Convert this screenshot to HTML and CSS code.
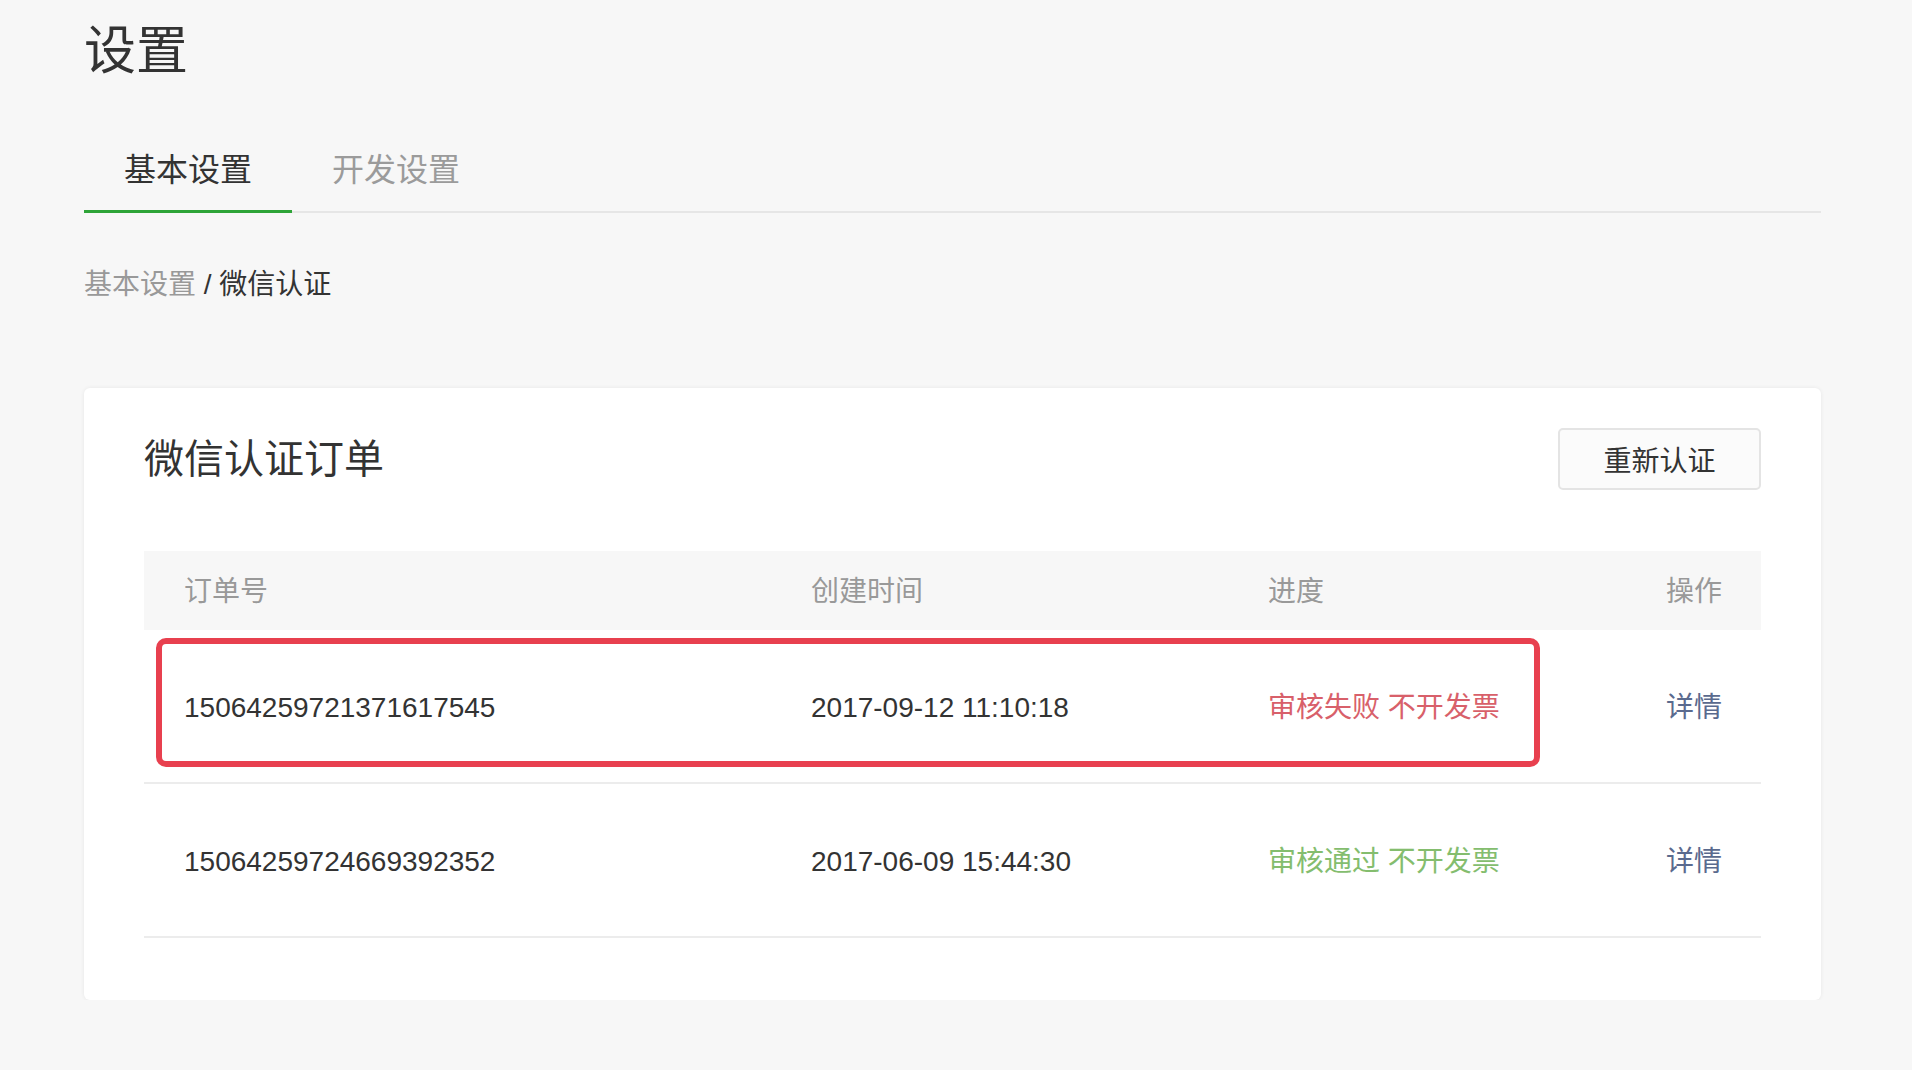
FILE: index.html
```html
<!DOCTYPE html>
<html lang="zh-CN">
<head>
<meta charset="utf-8">
<title>设置</title>
<link rel="stylesheet" href="styles.css">
</head>
<body>
<div class="page">
  <h1 class="page-title">设置</h1>
  <div class="tabs">
    <div class="tab tab-active">基本设置</div>
    <div class="tab">开发设置</div>
  </div>
  <div class="crumbs"><span class="crumb-muted">基本设置</span> / 微信认证</div>
  <div class="card">
    <div class="card-head">
      <div class="card-title">微信认证订单</div>
      <button class="btn">重新认证</button>
    </div>
    <div class="table">
      <div class="row row-head">
        <div class="cell">订单号</div>
        <div class="cell">创建时间</div>
        <div class="cell">进度</div>
        <div class="cell">操作</div>
      </div>
      <div class="row">
        <div class="cell">15064259721371617545</div>
        <div class="cell">2017-09-12 11:10:18</div>
        <div class="cell status-fail">审核失败 不开发票</div>
        <div class="cell link">详情</div>
      </div>
      <div class="row">
        <div class="cell">15064259724669392352</div>
        <div class="cell">2017-06-09 15:44:30</div>
        <div class="cell status-ok">审核通过 不开发票</div>
        <div class="cell link">详情</div>
      </div>
      <div class="highlight"></div>
    </div>
  </div>
</div>
</body>
</html>
```

FILE: styles.css
```css
html, body {
  margin: 0;
  padding: 0;
}
body {
  background: #f7f7f7;
  font-family: "Liberation Sans", "Noto Sans CJK SC", sans-serif;
  color: #333;
}
.page {
  padding: 25px 91px 0 84px;
}
.page-title {
  margin: 0;
  font-size: 52px;
  line-height: 52px;
  font-weight: normal;
  color: #333;
}
.tabs {
  margin-top: 56px;
  display: flex;
  box-shadow: inset 0 -2px 0 #e6e6e6;
}
.tab {
  font-size: 32px;
  line-height: 74px;
  padding: 0 40px 3px;
  color: #9b9b9b;
  border-bottom: 3px solid transparent;
}
.tab-active {
  color: #333;
  border-bottom-color: #2ea438;
}
.crumbs {
  margin-top: 58px;
  font-size: 28px;
  line-height: 28px;
  color: #333;
}
.crumb-muted {
  color: #999;
}
.card {
  margin-top: 89px;
  background: #fff;
  border-radius: 6px;
  box-shadow: 0 0 4px rgba(0, 0, 0, 0.07);
  padding: 40px 60px 62px;
}
.card-head {
  display: flex;
  justify-content: space-between;
  align-items: center;
  height: 62px;
}
.card-title {
  font-size: 40px;
  line-height: 62px;
  color: #333;
}
.btn {
  width: 203px;
  height: 62px;
  box-sizing: border-box;
  border: 2px solid #e4e4e4;
  border-radius: 5px;
  background: #fbfbfb;
  font-family: inherit;
  font-size: 28px;
  color: #333;
  padding: 0;
}
.table {
  margin-top: 61px;
  position: relative;
}
.row {
  display: grid;
  grid-template-columns: 627px 457px 398px 136px;
  height: 154px;
  box-sizing: border-box;
  border-bottom: 2px solid #ececec;
  align-items: center;
  font-size: 28px;
  line-height: 28px;
}
.row-head {
  height: 79px;
  border-bottom: none;
  background: #f7f7f7;
  color: #999;
}
.cell {
  padding-left: 40px;
  padding-top: 4px;
  white-space: nowrap;
}
.row-head .cell {
  padding-top: 2px;
}
.status-fail {
  color: #d8606a;
}
.status-ok {
  color: #84bd6e;
}
.link {
  color: #5a6a8e;
}
.highlight {
  position: absolute;
  top: 87px;
  left: 12px;
  width: 1384px;
  height: 129px;
  box-sizing: border-box;
  border: 6px solid #e8404f;
  border-radius: 10px;
  pointer-events: none;
}
```
